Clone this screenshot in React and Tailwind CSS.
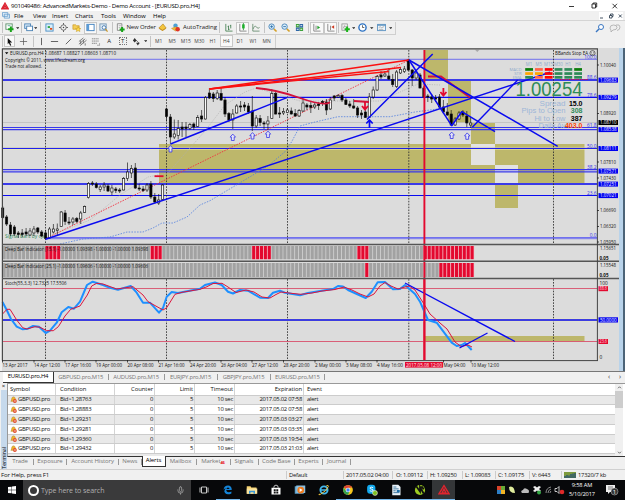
import React from "react";
import { Mic } from "lucide-react";

const BLUE = "#0a0af0";
const RED = "#e3092f";
const OLIVE = "#bdb76b";

// high, top, bottom, low, filled
const CANDLES = [
    [206, 208, 217.5, 219, 1], [215, 217, 224, 226, 1], [222, 225, 234, 236, 1], [225, 227, 234, 236, 1],
    [231, 233, 234.5, 238, 1], [229, 233, 234.5, 237, 1], [228, 232, 234, 236, 1], [228, 231, 235, 236, 0],
    [226, 229, 233, 236, 0], [227, 228, 232, 234, 1], [230, 232, 236, 237, 1], [230, 233, 238.5, 239.5, 1],
    [227, 229, 238, 238.5, 0], [224, 229, 232, 233.5, 0], [223.5, 229, 230.5, 235, 0], [211, 212, 226.5, 227, 0],
    [210, 213, 221.5, 225, 1], [217, 222, 223, 225, 1], [217, 219, 222, 225, 0], [217, 218.5, 221.5, 223, 1],
    [211, 213, 219, 224, 0], [205.5, 206.5, 212.5, 213, 0], [182, 183.5, 197.5, 198.5, 0], [181, 183, 184, 186, 1],
    [182, 184, 187.5, 188.5, 1], [185, 187, 189.5, 192, 0], [182, 185, 187, 191, 0], [184, 186, 191, 192, 1],
    [185, 188, 192, 195, 0], [187, 189, 190.5, 193, 1], [188, 190, 191, 193, 1], [177, 178.5, 190, 190.5, 0],
    [162.5, 172, 178.5, 181, 0], [165, 168.5, 173, 178, 0], [163, 168, 188, 189, 1], [184, 188, 189, 191, 1],
    [186, 189, 190.5, 192, 1], [183, 185, 190, 192, 0], [181, 184, 197, 199, 1], [193, 197, 202, 203.5, 1],
    [194, 200, 203, 205, 0], [184, 185, 199.5, 201, 0], [107.5, 109, 116.5, 121.5, 1], [114, 117, 137, 144, 1],
    [119.5, 134, 137, 139, 0], [120, 128.5, 135.5, 139.5, 0], [122, 127, 129, 137, 1], [122, 127, 128.5, 137, 1],
    [123, 124.5, 128.5, 130, 0], [122.5, 124, 127, 130, 1], [115, 117.5, 126.5, 127, 0], [110, 116, 119, 122, 1],
    [96, 97.5, 119, 119.5, 0], [88, 93, 98, 99, 1], [92, 94, 98.5, 102, 1], [90, 93, 98.5, 100, 0],
    [88, 93.5, 100, 101, 1], [97, 100, 114, 117, 1], [112, 113.5, 120, 122, 1], [109, 114, 120, 129, 0],
    [104, 106, 113, 113.5, 0], [101, 106, 107, 112, 1], [102, 105, 107, 111, 1], [103, 106, 112, 114, 1],
    [96, 111, 126, 131, 1], [115, 118, 126, 128, 0], [115, 118.5, 122.5, 126, 1], [121, 123, 124, 129, 1],
    [116, 121, 124, 130, 0], [89, 93.5, 118.5, 119, 0], [90.5, 93.5, 114, 114.5, 1], [107, 113, 114, 118, 1],
    [108, 111.5, 113, 115, 0], [108, 110, 112.5, 113, 0], [107.5, 111, 114, 114.5, 1], [109, 113.5, 116, 117, 1],
    [109, 110.5, 116, 117, 0], [98.5, 103, 111, 112, 0], [103, 105, 107, 110, 1], [102, 105.5, 107.5, 113, 1],
    [103, 105, 107, 109, 0], [102, 104, 105.5, 110, 1], [100, 101.5, 103, 106, 1], [99, 102, 110, 115, 1],
    [97, 100, 109, 110, 0], [95, 96, 98, 101, 1], [94, 95.5, 97, 98, 0], [94, 95.5, 100, 102, 1],
    [98, 100, 104.5, 105, 1], [101, 104, 106, 108, 1], [99, 106, 108, 109, 1], [106, 108, 115, 118, 1],
    [110, 113, 115, 119, 1], [110, 112, 117.5, 118, 1], [93, 97, 117.5, 118, 0], [86.5, 90, 97, 99, 0],
    [75, 76.5, 90, 91, 0], [71, 75, 77, 79, 1], [71, 74, 76, 77, 0], [68, 76, 79, 80, 1],
    [74, 79.5, 84.5, 87, 1], [70, 72, 86.5, 88, 0], [67, 69.5, 73, 74, 0], [66, 69, 71.5, 73, 0],
    [59, 60, 70, 71, 1], [69, 70, 78, 86, 1], [72, 73, 78, 80, 0], [73, 75, 88, 88.5, 1],
    [86, 88, 97, 98, 1], [94, 96, 97, 102, 1], [94, 97, 99, 103, 1], [95, 98, 99, 102, 1],
    [94, 97, 107, 108, 1], [100, 107, 112, 114, 1], [103, 112, 115, 116, 1], [110, 114, 125, 126, 1],
    [117, 119, 125, 126, 0], [111, 113, 119, 120, 0], [110, 112, 115, 117, 1], [111, 116, 123, 127, 1],
    [117, 123, 125, 128, 0],
];

const STOCH_MAIN = "2.5,302 6.7,310 11,319 16.7,326.7 22.7,329.3 28,328.7 33,326 39,326.7 45.7,333 50,330.7 56.7,322.7 61.7,312.3 68.3,307 74,308.7 80,301.7 87,285 92.7,281.7 96.7,283 103,285 110,287.7 118,289.7 130.7,286 136.7,292.7 143,302.7 150,302.7 159,312.7 163,308 166.7,296.7 171.7,292 178,293 200,288.7 205,285 215,282.5 221.7,285 228,291.7 233,293.5 240,290 248,290.7 260,297.7 268,298 273,292.7 280,290.7 285,292.7 300,295.3 308,293 321.7,290.7 333,289 338,286 343,286.5 348,290 365.7,298 371.7,291.7 377.7,282.3 385,282 393,289.3 400,289 405,285 415,294 420,301.7 428,320 436.7,322.7 451.7,342.7 456.7,346 461.7,345 465,343 471.7,350";
const STOCH_SIGNAL = "2.5,314 7,309.3 10,309.3 16.7,320 22.7,327.7 26.7,329 35,326.7 40,327.3 46.7,330.7 53.3,330.7 58.3,326.7 65,316 70.7,309.3 80,306 87.3,295 91.7,286 96.7,283.3 103,284 116.7,289 133,286.7 143,295 148,301.7 163,310 166.7,307.7 175,294.3 182,292.3 200,289.3 207,286.7 213,283.5 222,283.3 228,287 236,292.5 246,290 254,292 262,297 270,298 276,294.5 281,292 293,293.5 301,294.3 312,293 322,291 335,289.5 344,287 352,290 360,294 368,297 374,294 380,286 385,282.5 391,286 398,289 403,287.5 409,286 415,290 424,304 430,314 440,323 447,329 455,342 461,346.5 468,345 472,347";

const DEEP_BAR_1 = [[44, 59], [149, 164], [250, 270], [356, 368], [423, 474]];
const DEEP_BAR_2 = [[363.5, 368], [438, 474]];

const AXIS = [[65, "1.10040"], [113.5, "1.08920"], [162, "1.07810"], [178, "1.07430"], [210.5, "1.06690"], [226.5, "1.06320"], [242, "1.05950"]];
const MARKS = [[80, "1.09683"], [97.3, "1.09279"], [129.5, "1.08538"], [148.4, "1.08111"], [171, "1.07571"], [184, "1.07251"], [195.5, "1.07021"]];
const FIBS = [[58, "100.0"], [77.5, "88.6"], [95.5, "78.6"], [125.5, "61.8"], [146.5, "50.0"], [167.5, "38.2"], [193.5, "23.6"], [235.8, "0.0"]];
const TIMES = [
    [2.5, 25, "13 Apr 2017"], [34, 26, "14 Apr 12:00"], [65, 26, "17 Apr 16:00"], [96, 26, "19 Apr 00:00"], [127.5, 26, "20 Apr 08:00"],
    [158.5, 26, "21 Apr 16:00"], [190, 26, "24 Apr 20:00"], [221, 26, "26 Apr 04:00"], [252, 26, "27 Apr 12:00"], [283.5, 26, "28 Apr 20:00"],
    [315, 26, "2 May 00:00"], [346, 26, "3 May 08:00"], [377, 26, "4 May 16:00"], [443.5, 22, "May 04:00"], [471, 28, "10 May 12:00"],
];
const G = "#2e8b57";
const SIGNALS = [
    ["MACD", 69.5, ["#0a7d0a", "#ff6347", "#ff0000", G, G, "#0a7d0a"]],
    ["STR", 73.6, ["#ffa500", "#ffa500", "#ff0000", G, G, G]],
    ["EMA", 77.4, [G, "#ff6347", "#ff0000", G, G, G]],
];
const STATS = [["Spread", 26, 106, "15.0", "#000"], ["Pips to Open", 44, 113.2, "308", G], ["Hi to Low", 31, 120.6, "387", "#000"], ["Daily Av", 27, 127.8, "403.0", "#ff4500"]];

const Label = ({ x, y, w, size = 5, fill = "#111", anchor = "start", weight, children }) => (
    <text x={x} y={y} fontSize={size} fill={fill} textAnchor={anchor} fontWeight={weight}
          textLength={w} lengthAdjust="spacingAndGlyphs">{children}</text>
);

const Line = ({ p, color = BLUE, w = 1.4, dash }) => (
    <polyline points={p} fill="none" stroke={color} strokeWidth={w} strokeDasharray={dash} strokeLinejoin="round"/>
);

const UpMark = ({ x, y }) => (
    <path d={`M${x} ${y - 3.4}l2.7 3h-1.3v3.4h-2.8v-3.4h-1.3z`} fill="#e4e4f4" stroke="#3535e8" strokeWidth="0.8"/>
);

const DownArrow = ({ x, y }) => (
    <path d={`M${x} ${y - 4}v7M${x - 3} ${y}l3 3.6l3 -3.6`} fill="none" stroke={RED} strokeWidth="1.8"/>
);

const DeepBars = ({ y, h, ranges }) => (
    <g>
        {CANDLES.map((_, i) => {
            const x = 2.2 + i * 3.9;
            const hot = ranges.some(([a, b]) => x >= a - 1.5 && x + 2 < b);
            return (
                <g key={i}>
                    <rect x={x} y={y} width="3.9" height={h} fill={hot ? "#f5a3b2" : "#c9c9c9"}/>
                    <rect x={x + 0.4} y={y} width="3" height={h} fill={hot ? RED : "#a2a2a2"}/>
                </g>
            );
        })}
    </g>
);

const Chart = () => (
    <svg viewBox="0 48 619 323" className="h-[323px] w-[619px] shrink-0 bg-[#dcdcdc]" fontFamily='"Open Sans", "Noto Sans", sans-serif'>
        <rect x="0" y="48" width="2" height="323" fill="#f0f0f0"/>
        {/* price zones */}
        <g fill={OLIVE}>
            <rect x="159" y="144" width="425.5" height="39.5"/>
            <rect x="425" y="50" width="23" height="29.5"/>
            <rect x="448" y="80" width="23" height="43"/>
            <rect x="471" y="123" width="24" height="21"/>
            <rect x="495" y="184" width="23" height="24"/>
            <rect x="425" y="336" width="159.5" height="5.5"/>
        </g>
        <rect x="471" y="144" width="24" height="21" fill="#e2e2e2"/>
        <rect x="495" y="165" width="23" height="18.5" fill="#e2e2e2"/>

        {/* levels */}
        <path d="M3 122.5H597" stroke="#bfbfbf" strokeWidth="0.8"/>
        <path d="M45.5 59.3H597M45.5 237.5H597M45.5 238.7H597" stroke="#5555f2" strokeWidth="0.8"/>
        <path d="M3 80H597M3 184H597" stroke="#3a3aea" strokeWidth="1.9"/>
        <path d="M3 97.4H597M3 195.5H597" stroke={BLUE} strokeWidth="1.1"/>
        <path d="M3 147.4H597M3 149.4H597" stroke="#eeeeb0" strokeWidth="0.6"/>
        <path d="M3 148.4H597" stroke={BLUE} strokeWidth="1"/>
        <path d="M3 127.5H597M3 129.7H597M3 169.7H597M3 171.8H597" stroke="#3838ec" strokeWidth="1.2"/>
        <path d="M45.5 50V360M166.5 50V360M287.5 50V360M408.8 50V360M553.5 50V360" stroke="#333" strokeWidth="0.9" strokeDasharray="1.6 1.3"/>

        <Label x="5" y="237.5" w="40" fill={G}>Signal Bars by cja</Label>
        <Line p="52,235 90,220 120,195 148,177 168,173 190,148 205,131 225,105 245,92 256,88 300,101 380,101 418,84 440,85" color="#b0b0b0" w={0.7} dash="1.2 1.2"/>
        <Line p="60,244 83,239 110,237 127,232 143,232 153,228 162,223 173,223 187,217 200,205 210,200.7 238,184 268,166 285,151.7 291.7,141.7 300,126 315,122 338,116.7 390,116.7 415,112 445,108" color="#4f7de0" w={0.8} dash="1.5 1.3"/>
        <Line p="45,239 409,60" color="#f03040" w={0.9} dash="1.5 1.2"/>

        {CANDLES.map(([high, top, bottom, low, filled], i) => {
            const x = 2.7 + i * 3.9;
            return (
                <g key={i} stroke="#111" strokeWidth="0.65">
                    <path d={`M${x} ${high}V${low}`}/>
                    <rect x={x - 1.1} y={top} width="2.2" height={bottom - top} fill={filled ? "#000" : "#fafafa"}/>
                </g>
            );
        })}

        <Line p="209.5,89 409,60" color="#fb1010" w={1.6}/>
        <Line p="209.5,89 401,67.5" color="#fb1010"/>
        <Line p="209.5,89 389,71.5" color="#fb1010"/>
        <path d="M256 88Q276 89.5 300 98T330 102.3M354 101L369 102M428 76.5H441L470 97.5" fill="none" stroke="#d3123a" strokeWidth="1.8"/>
        <path d="M154.5 176.2H163.5" stroke={RED} strokeWidth="1.8"/>
        <path d="M560 79.5H588" stroke={RED} strokeWidth="1" strokeDasharray="1.2 1"/>
        <path d="M424.4 50V360" stroke={RED} strokeWidth="1.9"/>

        <Line p="45.5,239.2 550,72.3" w={1.5}/>
        <Line p="170.5,144 287.5,97.3"/>
        <Line p="367,119.5 432.7,54" w={1.5}/>
        <Line p="409,60 557.7,146.3" w={1.5}/>
        <Line p="409,60 451.7,125.7 461.7,111.7 495,131.7" w={1.5}/>
        <Line p="472.3,127.3 517.7,80"/>
        <path d="M369.5 128V120.5M366.3 123.5L369.5 120L372.7 123.5" fill="none" stroke={BLUE} strokeWidth="1.7"/>
        <DownArrow x={365} y={106}/>
        <DownArrow x={443.4} y={92}/>
        <UpMark x={170.5} y={149}/>
        <UpMark x={232.8} y={137.5}/>
        <UpMark x={252.5} y={136}/>
        <UpMark x={268} y={134.5}/>
        <UpMark x={451.7} y={135.5}/>
        <UpMark x={467.2} y={136.3}/>

        <path d="M5 52.3h3.4l-1.7 2z" fill="#000"/>
        <Label x="10" y="55.3" w="106">EURUSD.pro,H4  1.08687 1.08827 1.08603 1.08710</Label>
        <Label x="5" y="61.7" w="80">Copyright © 2011, www.lifesdream.org</Label>
        <Label x="5" y="68" w="37">Trade not allowed.</Label>
        <Label x="555" y="55" w="33" size={4.6}>BBands Stop EA</Label>
        <circle cx="592.5" cy="53.2" r="2.6" fill="none" stroke="#333" strokeWidth="0.7"/>
        <path d="M591.2 52.6h.7M593.2 52.6h.7M591.2 54q1.3 1 2.6 0" fill="none" stroke="#333" strokeWidth="0.6"/>
        <path d="M475 49.8h4.5l-2.2 2.2z" fill="#aaa"/>

        {/* dashboard */}
        {["M1", "M5", "M15", "M30", "H1", "H4"].map((t, i) => (
            <Label key={t} x={529 + i * 9.8} y="66.3" size={4.4} fill="#8ea9cb" anchor="middle">{t}</Label>
        ))}
        {SIGNALS.map(([name, y, colors]) => (
            <g key={name}>
                <Label x="521.5" y={y + 1.6} size={4.2} fill="#8ea9cb" anchor="end">{name}</Label>
                {colors.map((c, i) => <rect key={i} x={525.2 + i * 9.8} y={y - 1.4} width="7.8" height="2.7" fill={c}/>)}
            </g>
        ))}
        <g fontFamily='"Liberation Sans", sans-serif'>
            <Label x="515.5" y="96.3" w="67" size={20} fill={G}>1.00254</Label>
            {STATS.map(([name, w, y, value, color]) => (
                <g key={name}>
                    <Label x={565.5} y={y} w={w} size={7.2} anchor="end" fill="#9db6d8">{name}</Label>
                    <Label x={582.5} y={y} size={7} weight="700" anchor="end" fill={color}>{value}</Label>
                </g>
            ))}
        </g>

        {/* indicator windows */}
        <rect x="2" y="245" width="595" height="34" fill="#dcdcdc"/>
        <DeepBars y={246} h={13.2} ranges={DEEP_BAR_1}/>
        <DeepBars y={263} h={14} ranges={DEEP_BAR_2}/>
        <Label x="5" y="251" w="143" size={4.8}>Deep Bar Indicator (15,1) -1.00000 1.09398 -1.00000 -1.00000 1.09398</Label>
        <Label x="5" y="267.7" w="143" size={4.8}>Deep Bar Indicator (25,1) -1.00000 1.09606 -1.00000 -1.00000 1.09606</Label>
        <path d="M424.4 244V279" stroke={RED} strokeWidth="1.9"/>

        <path d="M3 288.5H597M3 341.5H597" stroke="#d8506c" strokeWidth="0.9"/>
        <path d="M3 320H597" stroke="#f4f4a8" strokeWidth="2.6"/>
        <path d="M3 320H597" stroke="#0000f5" strokeWidth="1.6"/>
        <Line p={STOCH_MAIN} color="#1e90ff" w={2}/>
        <Line p={STOCH_SIGNAL} color="#dc143c" w={1}/>
        <Line p="405,283 515,341.5"/>
        <Line p="459.5,348 487.5,333"/>
        <path d="M424.4 279V360" stroke={RED} strokeWidth="1.9"/>
        <Label x="5" y="285.2" w="61.5" size={4.8}>Stoch(55,3,3) 12.7325 17.5506</Label>

        {/* frames */}
        <path d="M2 48.9H598M2.4 48.5V360.5" stroke="#4a4a4a" strokeWidth="1.2"/>
        <path d="M2 244.4H619M2 261.2H619M2 278.4H619" stroke="#555" strokeWidth="1.5"/>
        <path d="M597.4 49V361M2 360.6H598" stroke="#444" strokeWidth="1"/>

        {/* price axis */}
        {AXIS.map(([y, t]) => (
            <g key={t}>
                <path d={`M597 ${y}h2`} stroke="#222" strokeWidth="0.8"/>
                <Label x="600" y={y + 1.8} w="16" size={4.8}>{t}</Label>
            </g>
        ))}
        {MARKS.map(([y, t]) => (
            <g key={t}>
                <rect x="598.5" y={y - 2.4} width="19.5" height="5" fill="#0000f0"/>
                <Label x="600" y={y + 1.8} w="16.5" size={4.8} fill="#eef0ff">{t}</Label>
            </g>
        ))}
        <rect x="598.5" y="120" width="19.5" height="5" fill="#000"/>
        <Label x="600" y="124.3" w="16.5" size={4.8} fill="#fff">1.08710</Label>
        {FIBS.map(([y, t]) => <Label key={t} x="596.5" y={y + 1} size={4.8} fill="#3030e8" anchor="end">{t}</Label>)}

        {[[250, "1.15651"], [267, "1.15548"]].map(([y, t]) => <Label key={t} x="600" y={y} w="16" size={4.8}>{t}</Label>)}
        {[259.5, 276.8].map((y) => <Label key={y} x="599.5" y={y} w="9" size={4.8} weight="700">0.05</Label>)}
        <Label x="599.5" y="284.5" size={4.8}>100</Label>
        <Label x="599.5" y="359.3" size={4.8}>0</Label>
        <rect x="598.5" y="286.2" width="9.5" height="5" fill={RED}/>
        <Label x="599.5" y="290.4" w="7.5" size={4.8} fill="#ffdbe2">88.6</Label>
        <rect x="598.5" y="317.3" width="19.5" height="5.2" fill="#0000f0"/>
        <Label x="600" y="321.8" w="16.5" size={4.8} fill="#eef0ff">50.0000</Label>
        <rect x="598.5" y="339" width="9.5" height="5" fill={RED}/>
        <Label x="599.5" y="343.3" w="7.5" size={4.8} fill="#ffdbe2">23.6</Label>

        {/* time axis */}
        {TIMES.map(([x, w, t]) => (
            <g key={t}>
                <path d={`M${x} 360v2.5`} stroke="#222" strokeWidth="0.8"/>
                <Label x={x} y="366.8" w={w} size={4.9}>{t}</Label>
            </g>
        ))}
        <rect x="405" y="362" width="38" height="5.6" fill={RED}/>
        <Label x="406" y="366.6" w="36" size={4.9} fill="#ffe6eb">2017.05.08 12:00</Label>
    </svg>
);

/* toolbar glyphs share a 10x10 box */
const GLYPHS = {
    newChart: <><rect x="1" y="1" width="7" height="6" fill="#fff" stroke="#5d8f6b"/><path d="M3 3h3" stroke="#5a9"/><path d="M6.5 4v6M3.5 7h6" stroke="#19a319" strokeWidth="2.2"/></>,
    profiles: <><rect x=".8" y="1" width="6.5" height="5" fill="#d9ebfa" stroke="#4c83b5"/><rect x="3" y="3.5" width="6.5" height="5" fill="#fff" stroke="#4c83b5"/></>,
    market: <><rect x="1" y="1" width="8" height="8" fill="#d9eefb" stroke="#4b8fc5"/><path d="M3 3.5h2.5v2H3z" fill="#27a33a"/><path d="M5.5 5.5H8v2H5.5z" fill="#e05018"/></>,
    window: <><path d="M5 0v10M0 5h10" stroke="#555"/><circle cx="5" cy="5" r="3" fill="#f2f2f2" stroke="#666"/><circle cx="5" cy="5" r=".8" fill="#444"/></>,
    folder: <><path d="M1 2h3l1 1h3v4H1z" fill="#f4ce57" stroke="#c79520" strokeWidth=".7"/><path d="M6.8 4l1 2 2 .2-1.5 1.3.5 2-2-1-2 1 .5-2L4 6.2l2-.2z" fill="#ffdb4d" stroke="#bd8c13" strokeWidth=".5"/></>,
    navigator: <><rect x="1" y="1.5" width="8" height="7" fill="#fff" stroke="#3d7fbd"/><path d="M1 1.5h2.5v7H1z" fill="#5b9bd5"/></>,
    tester: <><rect x="1" y="1" width="7" height="7" fill="#dbe9f5" stroke="#7697b5"/><circle cx="5.5" cy="5" r="2" fill="#fff" stroke="#3f76ad"/><path d="M7 6.5l2.5 3" stroke="#c9982d" strokeWidth="1.4"/></>,
    order: <><path d="M1.5 .8h5v7.4h-5z" fill="#f7f7f7" stroke="#888"/><path d="M3 3h2.5M3 5h2" stroke="#888" strokeWidth=".6"/><path d="M6.8 4.5v5.4M4 7.2h5.6" stroke="#19a319" strokeWidth="2.2"/></>,
    gold: <><path d="M1 5.5L5.5 1 9 5.5 5 8z" fill="#f4c53c" stroke="#ac7b12" strokeWidth=".7"/><path d="M1 5.5v1L5 9l4-2.5v-1L5 8z" fill="#c98d18"/></>,
    auto: <><circle cx="5" cy="3" r="2.5" fill="#4ba0d5"/><path d="M.5 6L5 4.2 9 6 5 9z" fill="#eeb935" stroke="#a87c1f" strokeWidth=".4"/><circle cx="7.4" cy="7" r="2.5" fill="#df3426"/></>,
    bars: <path d="M2 1v8h7.5M5 3v5M4 4h1M5 7h1.3M7.5 2v4M6.5 3h1" fill="none" stroke="#3d7a4a" strokeWidth=".9"/>,
    candles: <><path d="M2 1v8h7.5" fill="none" stroke="#666" strokeWidth=".8"/><path d="M6 0v8" stroke="#187a22" strokeWidth=".8"/><rect x="4.6" y="1.5" width="2.8" height="4.5" fill="#1caf2b"/></>,
    line: <path d="M2 1v8h7.5M2.5 6.5Q4 2 6 4.5T9.5 5" fill="none" stroke="#5b8565" strokeWidth=".9"/>,
    zoomIn: <><path d="M6.5 6.5L9.5 9.5" stroke="#d3a02a" strokeWidth="1.8"/><circle cx="4" cy="4" r="3" fill="#d8edfb" stroke="#4583b8"/><path d="M4 2.5v3M2.5 4h3" stroke="#2468a5" strokeWidth=".9"/></>,
    zoomOut: <><path d="M6.5 6.5L9.5 9.5" stroke="#d3a02a" strokeWidth="1.8"/><circle cx="4" cy="4" r="3" fill="#d8edfb" stroke="#4583b8"/><path d="M2.5 4h3" stroke="#2468a5" strokeWidth=".9"/></>,
    tile: <><path d="M1 1h4v4H1zM5 5h4v4H5z" fill="#3da23b"/><path d="M5 1h4v4H5zM1 5h4v4H1z" fill="#2e66a8"/><path d="M2 3h2M6 3h2M2 7h2M6 7h2" stroke="#fff"/></>,
    scroll: <><path d="M2 1v8h7.5M4.5 3v5" fill="none" stroke="#777" strokeWidth=".9"/><path d="M6 3l3 2-3 2z" fill="#22a02c"/></>,
    shift: <><path d="M2 1v8h7.5M5 3v5" fill="none" stroke="#777" strokeWidth=".9"/><path d="M9 2.5L6 4.5l3 2z" fill="#d03b20"/></>,
    indicator: <><rect x="1" y="1" width="6" height="7" fill="#f0f0f0" stroke="#888" strokeWidth=".8"/><path d="M2.5 6l1.5-3 1.5 2" fill="none" stroke="#777" strokeWidth=".7"/><path d="M6.8 4v6M4 7h5.8" stroke="#19b519" strokeWidth="2.2"/></>,
    clock: <><circle cx="5" cy="5" r="4" fill="#fff" stroke="#2d73c4" strokeWidth="1.6"/><path d="M5 2.5V5h2" fill="none" stroke="#333" strokeWidth=".8"/></>,
    template: <><rect x=".7" y="1.5" width="8.6" height="7" fill="#f5fafe" stroke="#4a86ba" strokeWidth=".9"/><path d="M.7 2.5h8.6" stroke="#4a86ba"/><path d="M2 5l1.5-.8L5 5.2 8 4M2 7h5" fill="none" stroke="#888" strokeWidth=".7"/></>,
    cursor: <path d="M3 1l5 5H5.5L7 9.2l-1.3.5L4.3 6.6 3 8z" fill="#111"/>,
    cross: <path d="M5 1v8M1 5h8" stroke="#555" strokeWidth=".8"/>,
    vline: <path d="M5 1v8" stroke="#444" strokeWidth=".9"/>,
    hline: <path d="M1 5h8" stroke="#444" strokeWidth=".9"/>,
    trend: <path d="M2 8l6-6" stroke="#444" strokeWidth=".9"/>,
    channel: <path d="M1 8l7-6M2.5 9.5l7-6M1 5l5-4M3 4v4M6 3v4M8 7v2.5" stroke="#555" strokeWidth=".8"/>,
    fibo: <path d="M1 2h8M1 4.5h8M1 7h6M7 9.2h2.5V7" fill="none" stroke="#666" strokeWidth=".8" strokeDasharray="1.5 .5"/>,
    shapes: <><path d="M1 4l2-3 2 3-2 2zM4.5 6.5h4L6.5 9.5z" fill="#333"/><path d="M4 3l4 4" stroke="#333" strokeWidth=".7"/></>,
};

const Glyph = ({ name }) => <svg viewBox="0 0 10 10" className="size-[9px] shrink-0 overflow-visible">{GLYPHS[name]}</svg>;

const Tool = ({ name, w = "w-[13.5px]", on, children }) => (
    <div className={`flex h-[12px] shrink-0 items-center justify-center ${w} ${on ? "border border-[#c8c8c8] bg-[#f9f9f9]" : ""}`}>
        {name ? <Glyph name={name}/> : children}
    </div>
);

const Caret = () => (
    <div className="flex w-[5px] shrink-0 justify-center">
        <svg viewBox="0 0 4 2" className="h-[2px] w-[3.5px]"><path d="M0 0h4L2 2z" fill="#222"/></svg>
    </div>
);

const Sep = ({ w = "w-[4px]" }) => (
    <div className={`flex h-[11px] shrink-0 justify-center ${w}`}><div className="w-px bg-[#c4c4c4]"/></div>
);

const Toolbars = () => (
    <div className="h-[27px] shrink-0 bg-[#f0f0f0] text-[6px] text-[#222]">
        <div className="flex h-[14px] items-center">
            <div className="flex h-[13px] w-[396px] items-center border-r border-b border-[#cfcfcf]">
                <Sep/><Tool name="newChart" w="w-[11px]"/><Caret/><Sep w="w-[3px]"/>
                <Tool name="profiles" w="w-[10px]"/><Caret/><Sep w="w-[5px]"/>
                <Tool name="market"/><Tool name="window"/><Tool name="folder"/><Tool name="navigator" on/><Tool name="tester"/>
                <Sep/><Tool name="order" w="w-[11px]"/>
                <span className="w-[30px] shrink-0 pl-px whitespace-nowrap tracking-[-0.15px]">New Order</span>
                <Tool name="gold"/><Tool name="auto" w="w-[13px]"/>
                <span className="w-[34px] shrink-0 pl-px whitespace-nowrap tracking-[-0.05px]">AutoTrading</span>
                <Sep w="w-[6px]"/><Tool name="bars"/><Tool name="candles" on/><Tool name="line"/>
                <Sep w="w-[3px]"/><Tool name="zoomIn"/><Tool name="zoomOut"/><Tool name="tile"/>
                <Sep/><Tool name="scroll" on/><Tool name="shift" on/><Sep w="w-[2px]"/>
                <Tool name="indicator" w="w-[12px]"/><Caret/><Tool name="clock"/><Caret/><Tool name="template"/><Caret/>
            </div>
            <svg viewBox="0 0 26 10" className="mr-1 ml-auto h-[10px] w-[26px]">
                <circle cx="6" cy="4" r="2.5" fill="#fff" stroke="#3976c2"/><path d="M4 6L1 9" stroke="#3976c2" strokeWidth="1.5"/>
                <path d="M15 5q0-3 3.5-3t3.5 2.5-4 2.5l-2 2v-2q-1-1-1-2z" fill="#eee" stroke="#aaa" strokeWidth=".8"/>
                <path d="M21 2q4-1 4 2t-3 3.5" fill="none" stroke="#aaa" strokeWidth=".8"/>
            </svg>
        </div>
        <div className="flex h-[12.5px] w-[276px] items-center border-r border-[#cfcfcf]">
            <Sep/><Tool name="cursor" w="w-[11px]" on/><Tool name="cross" w="w-[16px]"/><Sep/>
            <Tool name="vline" w="w-[12px]"/><Tool name="hline" w="w-[15px]"/><Tool name="trend"/>
            <Tool name="channel"/><Tool name="fibo"/>
            <Tool>A</Tool>
            <Tool><span className="flex size-[8px] items-center justify-center border border-dotted border-[#777]">T</span></Tool>
            <Tool name="shapes"/><Caret/><Sep/>
            <div className="flex text-[5px] text-[#444]">
                {["M1", "M5", "M15", "M30", "H1", "H4", "D1", "W1", "MN"].map((t) => <Tool key={t} on={t === "H4"}>{t}</Tool>)}
            </div>
        </div>
    </div>
);

const CHART_TABS = [["GBPUSD.pro,M15", "w-[54.5px]"], ["AUDUSD.pro,M15", "w-[56px]"], ["EURJPY.pro,M15", "w-[53px]"], ["GBPJPY.pro,M15", "w-[53px]"], ["EURUSD.pro,M15", "w-[54.5px]"]];

const ChartTabs = () => (
    <div className="flex h-[12px] shrink-0 border-t border-[#777] bg-[#f0f0f0] text-[5.9px] leading-[9px] tracking-[-0.22px] text-[#777]">
        <div className="ml-[3px] h-[10.5px] w-[51px] border-r border-b border-[#333] bg-white text-center text-black">EURUSD.pro,H4</div>
        {CHART_TABS.map(([t, w]) => (
            <div key={t} className={`mt-px flex h-[8px] items-center justify-center whitespace-nowrap ${w}`}>
                <span className="flex-1 text-center">{t}</span>
                <span className="h-[6px] w-px bg-[#999]"/>
            </div>
        ))}
        <div className="mr-[4px] ml-auto flex w-[13px] justify-between text-[7px] text-[#333]"><span>‹</span><span>›</span></div>
    </div>
);

const ALERTS = [
    ["1.28763", "2017.05.02 07:58"],
    ["1.28883", "2017.05.02 07:58"],
    ["1.29231", "2017.05.03 03:27"],
    ["1.29281", "2017.05.03 03:35"],
    ["1.29360", "2017.05.03 19:54"],
    ["1.29432", "2017.05.03 21:03"],
];

const Bell = () => (
    <svg viewBox="0 0 8 8" className="mr-px size-[7px] shrink-0">
        <path d="M1 6q1.2-1 1-3 .3-2 2-2t2 2q0 2 1 3z" fill="#f0b92d" stroke="#ad7612" strokeWidth=".6"/>
        <circle cx="5.5" cy="5.7" r="2.2" fill="#e14a28"/><path d="M4.3 5.7h2.4" stroke="#fff" strokeWidth=".8"/>
    </svg>
);

const Row = ({ cells, className }) => (
    <div className={`flex shrink-0 items-center ${className}`}>
        <div className="flex h-full w-[48px] items-center border-r border-[#d4d4d4] pl-[2px]">{cells[0]}</div>
        <div className="flex h-full w-[59px] items-center border-r border-[#d4d4d4] pl-[4px]">{cells[1]}</div>
        <div className="flex h-full w-[40px] items-center justify-end border-r border-[#d4d4d4] pr-px">{cells[2]}</div>
        <div className="flex h-full w-[40px] items-center justify-end border-r border-[#d4d4d4] pr-px">{cells[3]}</div>
        <div className="flex h-full w-[40px] items-center justify-end border-r border-[#d4d4d4] pr-px">{cells[4]}</div>
        <div className="flex h-full w-[69px] items-center justify-end border-r border-[#d4d4d4] pr-px">{cells[5]}</div>
        <div className="pl-[3px]">{cells[6]}</div>
    </div>
);

const TERMINAL_TABS = [
    ["Trade", "w-[27px]"], ["Exposure", "w-[33px]"], ["Account History", "w-[52px]"], ["News", "w-[22.5px]"], ["Alerts", "w-[24px]"], ["Mailbox", "w-[31px]"],
    ["Market", "w-[34px]"], ["Signals", "w-[28px]"], ["Code Base", "w-[36.5px]"], ["Experts", "w-[28px]"], ["Journal", "w-[28px]"],
];

const Terminal = () => (
    <div className="flex h-[86px] shrink-0 bg-[#f0f0f0]">
        <div className="flex w-[7px] shrink-0 flex-col items-center">
            <div className="h-[7px] text-[6px] leading-[6px]">×</div>
            <div className="flex w-[6px] flex-1 items-end justify-center bg-[#c6d9ec] text-[5.5px]">
                <span className="rotate-180 leading-[6px] tracking-[-0.1px] [writing-mode:vertical-rl]">Terminal</span>
            </div>
        </div>
        <div className="flex flex-1 flex-col">
            <div className="flex h-[74px] shrink-0 border-t border-b border-l border-t-[#999] border-b-[#333] border-l-[#999] bg-white">
                <div className="flex flex-1 flex-col overflow-hidden text-[5.9px] tracking-[-0.25px] whitespace-nowrap text-[#111]">
                    <Row className="h-[11.5px] border-b border-[#ccc] tracking-[-0.05px]" cells={["Symbol", "Condition", "Counter", "Limit", "Timeout", "Expiration", "Event"]}/>
                    {ALERTS.map(([price, at], i) => (
                        <Row key={price} className={i % 2 ? "h-[9.77px] border-b border-[#ccc] bg-white" : "h-[9.77px] border-b border-[#ccc] bg-[#e9e9e9]"}
                             cells={[<><Bell/><span>GBPUSD.pro</span></>, `Bid>${price}`, "0", "5", "10 sec", at, "alert"]}/>
                    ))}
                    <div className="flex-1 bg-[#e9e9e9]"/>
                </div>
                <div className="mr-[2px] flex w-[8px] flex-col items-center bg-[#f0f0f0]">
                    <svg viewBox="0 0 6 4" className="my-[2px] h-[3px] w-[5px]"><path d="M1 3l2-2 2 2" fill="none" stroke="#444"/></svg>
                    <div className="h-[17px] w-[8px] bg-[#cdcdcd]"/>
                    <svg viewBox="0 0 6 4" className="mt-auto mb-[2px] h-[3px] w-[5px]"><path d="M1 1l2 2 2-2" fill="none" stroke="#444"/></svg>
                </div>
            </div>
            <div className="flex h-[10px] text-[6px] leading-[9px] tracking-[-0.1px] text-[#777]">
                {TERMINAL_TABS.map(([t, w]) => t === "Alerts" ? (
                    <div key={t} className={`-mt-px h-[10.5px] border-x border-b border-[#333] bg-white text-center text-black ${w}`}>{t}</div>
                ) : (
                    <div key={t} className={`flex h-[9px] items-center whitespace-nowrap ${w}`}>
                        <span className="flex-1 text-center">{t}{t === "Market" && <sub className="text-[4px] font-bold text-red-600">46</sub>}</span>
                        <span className="h-[6px] w-px bg-[#999]"/>
                    </div>
                ))}
            </div>
        </div>
    </div>
);

const StatusBar = () => (
    <div className="flex h-[11px] shrink-0 items-center border-t border-[#d0d0d0] bg-[#f0f0f0] text-[5.8px] tracking-[-0.2px] whitespace-nowrap text-[#111]">
        <div className="w-[286px] pl-px text-[6.1px] tracking-[-0.15px]">For Help, press F1</div>
        <div className="w-[57px] border-l border-[#ccc] pl-[2px]">Default</div>
        <div className="w-[49px] border-l border-[#ccc] pl-[2px]">2017.05.02 04:00</div>
        <div className="w-[35px] border-l border-[#ccc] pl-[3px]">O: 1.09112</div>
        <div className="w-[35px] border-l border-[#ccc] pl-[2px]">H: 1.09250</div>
        <div className="w-[33px] border-l border-[#ccc] pl-[2px]">L: 1.09083</div>
        <div className="w-[34px] border-l border-[#ccc] pl-[2px]">C: 1.09175</div>
        <div className="w-[32px] border-l border-[#ccc] pl-[2px]">V: 6443</div>
        <div className="flex flex-1 items-center border-l border-[#ccc] pl-[2px]">
            <svg viewBox="0 0 12 6" className="mr-[2px] h-[6px] w-[12px]">
                <path d="M0 0h12v6H0z" fill="#7d9a3c"/>
                <path d="M1 6V4M3 6V3M5 6V3.5M7 6V2M9 6V1.5M11 6V1" stroke="#244f78" strokeWidth="1.3"/>
            </svg>
            17320/7 kb
        </div>
    </div>
);

const APPS = [
    ["edge", <path d="M2 7.5Q3 2 8 2q5 0 5 6H5.5q.5 3 3.5 3 2 0 3.5-1v2.5Q7 15 4 12q-2-2.5 0-5l1.5-1Q3 6 2 7.5zM6 6.5h4Q10 4.5 8 4.500T6 6.5z" fill="#1484d8"/>, true],
    ["files", <><path d="M1 3h5l1 1.5h7V13H1z" fill="#f6d272"/><path d="M1 6h14v7H1z" fill="#fbe59f"/><path d="M4 13V9h8v4h-2v-2H6v2z" fill="#3c98d6"/></>, false],
    ["store", <><path d="M2 5h12v9H2z" fill="#fff"/><path d="M5 5q0-3.5 3-3.5T11 5" fill="none" stroke="#fff"/><path d="M5 7h2.6v2.6H5zM8.4 7H11v2.6H8.4zM5 10.2h2.6v2.4H5zM8.4 10.2H11v2.4H8.4z" fill="#111"/></>, false],
    ["media", <><path d="M1 3h12v10H1z" fill="#5fa3cf"/><path d="M3 2h12v10H3z" fill="#8cbfdf"/><circle cx="9" cy="8" r="4.5" fill="#ee7a1e"/><path d="M7.5 5.5l4 2.5-4 2.5z" fill="#fff"/></>, false],
    ["ie", <><circle cx="8" cy="8" r="4.8" fill="none" stroke="#44b9ee" strokeWidth="2.5"/><path d="M4 8h9" stroke="#44b9ee" strokeWidth="2"/><path d="M2 13Q0 15 3 14 12 9 14 3q0-2-3-.5" fill="none" stroke="#f4c53d" strokeWidth="1.3"/></>, false],
    ["chrome", <><circle cx="8" cy="8" r="6.5" fill="#f5c51c"/><path d="M8 8L2.4 4.7A6.5 6.5 0 0 1 13.6 4.7L8 5z" fill="#dc4437"/><path d="M2.4 4.7A6.5 6.5 0 0 0 8 14.5L10 10 5 9z" fill="#31a352"/><circle cx="8" cy="8" r="3" fill="#fff"/><circle cx="8" cy="8" r="2.3" fill="#4285f4"/></>, true],
    ["skype", <><rect x="1.5" y="1" width="11" height="12" rx="4" fill="#12a9ee"/><path d="M9.5 5Q7 3.5 5.5 5q-.5 1.5 2 2t2 2Q8 10.5 5 9" fill="none" stroke="#fff" strokeWidth="1.3"/><circle cx="12" cy="12" r="3.3" fill="#7fbf21" stroke="#fff" strokeWidth=".7"/></>, true],
    ["writer", <><path d="M3 1h8l3 3v11H3z" fill="#e8f1f7"/><path d="M4.5 4h4M4.5 6.5h7M4.5 9h3M4.5 11.5h8" stroke="#356f96" strokeWidth="1.2"/><path d="M9 8h4v3H9z" fill="#1e6fa8"/></>, true],
    ["ninja", <><circle cx="8" cy="8" r="6.8" fill="#9dcc22"/><path d="M3 3l5 7V4l5 9M10 3l3 4" stroke="#111" strokeWidth="2.4" fill="none"/></>, true],
];

const Taskbar = () => (
    <div className="flex h-[20px] shrink-0 items-center bg-[#07080a] text-white">
        <div className="flex w-[23px] justify-center">
            <svg viewBox="0 0 10 10" className="size-[8px]"><path d="M0 1.4l4.5-.6v4H0zM5 .7L10 0v4.8H5zM0 5.2h4.5v4L0 8.6zM5 5.2h5V10l-5-.7z" fill="#fff"/></svg>
        </div>
        <div className="flex h-full w-[168px] items-center bg-[#3a3a3b] pl-[5px]">
            <div className="size-[11px] rounded-full border-2 border-white"/>
            <span className="ml-[2px] flex-1 text-[7.1px] tracking-[-0.1px] text-[#b0b0b0]">Type here to search</span>
            <Mic className="mr-[6px] size-[9px] text-[#a8a8a8]"/>
        </div>
        <div className="flex w-[25px] justify-center">
            <svg viewBox="0 0 10 8" className="h-[8px] w-[10px]"><path d="M2.5 1h5v6h-5zM1 1.5v5M9 1.5v5" fill="none" stroke="#ddd" strokeWidth=".9"/></svg>
        </div>
        {APPS.map(([name, art, open]) => (
            <div key={name} className={`flex h-full w-[24px] items-center justify-center border-b ${open ? "border-[#76b9ed]" : "border-transparent"}`}>
                <svg viewBox="0 0 16 16" className="size-[12px]">{art}</svg>
            </div>
        ))}
        <div className="flex h-full w-[23px] items-center justify-center border-b border-[#76b9ed] bg-[#343638]">
            <svg viewBox="0 0 12 11" className="h-[11px] w-[12px]"><path d="M6 1.5L11 9.8H1zM6 5l2 4H4z" fill="none" stroke="#e0242e" strokeWidth="1.4"/></svg>
        </div>
        <svg viewBox="0 0 70 10" className="ml-auto h-[10px] w-[70px]">
            <path d="M1 1h4v4H1z" fill="#d9432b"/><path d="M5 1h4v4H5z" fill="#6aa935"/><path d="M1 5h4v4H1z" fill="#2d7fc7"/><path d="M5 5h4v4H5z" fill="#f0b325"/>
            <path d="M13 2q5-2 6 6-6 0-6-6z" fill="#dfec9d"/>
            <path d="M26 8q-2-2 1-3 1-3 4-1 3 1 1.5 4z" fill="#bbb"/>
            <path d="M37 2l2-1 2 1.5L43 1l2 1-2 2 2 2-2 1-2-1.5L39 7l-2-1 2-2z" fill="#eee"/><circle cx="43" cy="7.5" r="2" fill="#35a845"/>
            <path d="M50 8q0-5 5-6M52 8q0-3 3-4M54 8q0-1 1-2" fill="none" stroke="#999" strokeWidth=".9"/>
            <path d="M59 3.5h2l2-2v7l-2-2h-2z" fill="none" stroke="#eee" strokeWidth=".8"/><circle cx="66" cy="7" r="2.3" fill="#df2929"/>
        </svg>
        <div className="flex w-[32px] flex-col items-center text-[5.7px] leading-[9px] tracking-[-0.1px] whitespace-nowrap">
            <span>9:58 AM</span><span>5/10/2017</span>
        </div>
        <div className="flex w-[27px] justify-center">
            <svg viewBox="0 0 14 12" className="h-[12px] w-[14px]">
                <path d="M1 1h9v7H5L3 10V8H1z" fill="#eee"/><path d="M3 3h5M3 5h5" stroke="#333" strokeWidth=".6"/>
                <circle cx="9.5" cy="7.5" r="3.5" fill="#333" stroke="#ccc" strokeWidth=".5"/>
                <text x="9.5" y="9.7" fontSize="6" fill="#fff" textAnchor="middle">1</text>
            </svg>
        </div>
    </div>
);

export default function App() {
    return (
        <div className="flex h-[500px] w-[625px] flex-col overflow-hidden bg-[#f0f0f0] font-['Open_Sans','Noto_Sans',sans-serif] text-black">
            <div className="flex h-[11px] shrink-0 items-center bg-white text-[6.1px] tracking-[-0.26px] whitespace-nowrap">
                <svg viewBox="0 0 8 8" className="mr-[2px] ml-px size-[8px]"><path d="M4 1L7.5 7h-7zM4 3.5L5.5 6h-3z" fill="#fff" stroke="#dc2332" strokeWidth="1.2"/></svg>
                901049486: AdvancedMarkets-Demo - Demo Account - [EURUSD.pro,H4]
                <svg viewBox="0 0 50 8" className="mr-[7px] ml-auto h-[8px] w-[50px]">
                    <path d="M1 4.5h5M24 2h3.5v4H24zM25.2 2V1h3.5v4h-1M44.5 1.8l4.5 4.5M49 1.8l-4.5 4.5" fill="none" stroke="#222" strokeWidth=".9"/>
                </svg>
            </div>
            <div className="flex h-[10px] shrink-0 items-center border-b border-[#d4d4d4] text-[6.1px] tracking-[-0.05px]">
                <svg viewBox="0 0 9 8" className="mr-[4px] ml-[2px] h-[7px] w-[8px]"><path d="M.5.5h6v4.5h-6zM2.5 2.5h6V7h-6z" fill="#dcecf8" stroke="#5c97c9" strokeWidth=".8"/></svg>
                <span className="w-[19px]">File</span>
                <span className="w-[19px]">View</span>
                <span className="w-[23px]">Insert</span>
                <span className="w-[26px]">Charts</span>
                <span className="w-[22px]">Tools</span>
                <span className="w-[30px]">Window</span>
                <span>Help</span>
                <svg viewBox="0 0 24 8" className="mr-[2px] ml-auto h-[8px] w-[24px] bg-white">
                    <path d="M1 6h3M10.5 3.5h2.5v2.5h-2.5zM11.5 3.5V2H14v2.5h-1M19.8 2.5L22.8 5.5M22.8 2.5L19.8 5.5" fill="none" stroke="#345" strokeWidth=".9"/>
                </svg>
            </div>
            <Toolbars/>
            <div className="flex h-[323px] shrink-0">
                <Chart/>
                <div className="w-[4px] bg-[#b9d3ea]"/>
                <div className="w-[2px] bg-[#4c6478]"/>
            </div>
            <ChartTabs/>
            <Terminal/>
            <StatusBar/>
            <Taskbar/>
        </div>
    );
}
